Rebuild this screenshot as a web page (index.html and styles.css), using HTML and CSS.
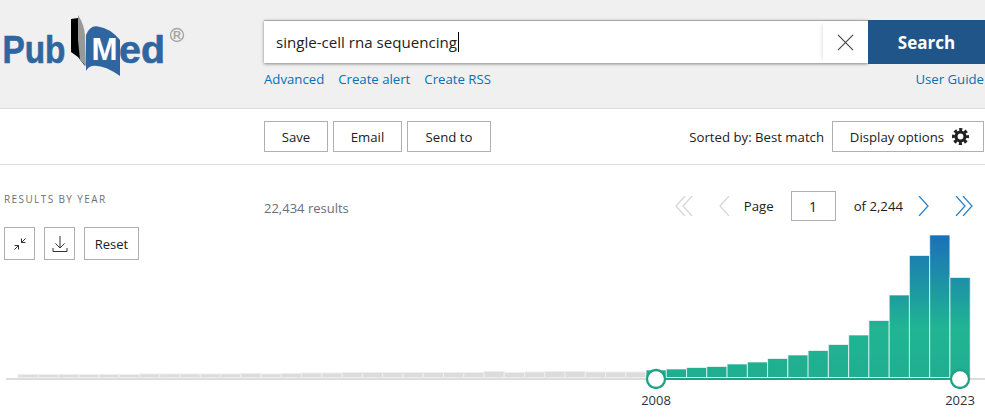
FILE: index.html
```html
<!DOCTYPE html>
<html lang="en">
<head>
<meta charset="utf-8">
<title>single-cell rna sequencing - PubMed</title>
<link rel="stylesheet" href="styles.css">
</head>
<body>
<header class="masthead">
  <div class="logo-col">
    <svg class="logo" width="190" height="80" viewBox="0 0 190 80">
      <text class="logo-word" x="2.500" y="63" textLength="63" lengthAdjust="spacingAndGlyphs">Pub</text>
      <text class="logo-word" x="119" y="63" textLength="46" lengthAdjust="spacingAndGlyphs">ed</text>
      <path d="M71 19 L78 18 L80 35 L85 66 L78 57 L71 52 Z" fill="#000"/>
      <path d="M78 15 Q84 24 85 35 L86 66 L80 60 L78 40 Z" fill="#999"/>
      <path d="M86 35 Q90 25 98 26.500 Q110 28 120 40 L120 76 Q103 64 92 66 Q88 67 86 71 Z" fill="#30669f"/>
      <text class="logo-m" x="91.500" y="60" textLength="26" lengthAdjust="spacingAndGlyphs">M</text>
      <circle cx="177" cy="35" r="6.500" fill="none" stroke="#a5a5a5" stroke-width="1.400"/>
      <text class="logo-r" x="177" y="39">R</text>
    </svg>
  </div>
  <div class="search-col">
    <form class="search-row">
      <div class="search-box">
        <span class="query">single-cell rna sequencing</span><span class="caret"></span>
        <span class="clear">
          <svg width="17" height="17" viewBox="0 0 18 18"><path d="M1 1 L17 17 M17 1 L1 17" stroke="#444" stroke-width="1.200" fill="none"/></svg>
        </span>
      </div>
      <button class="search-btn" type="button">Search</button>
    </form>
    <nav class="search-links">
      <a href="#">Advanced</a>
      <a href="#">Create alert</a>
      <a href="#">Create RSS</a>
      <a class="guide" href="#">User Guide</a>
    </nav>
  </div>
</header>

<section class="toolbar">
  <div class="actions">
    <button class="btn btn-save" type="button">Save</button>
    <button class="btn btn-email" type="button">Email</button>
    <button class="btn btn-send" type="button">Send to</button>
  </div>
  <div class="sort">
    <span>Sorted by: Best match</span>
    <button class="btn btn-display" type="button">Display options
      <svg class="gear" width="17" height="17" viewBox="0 0 17 17">
        <circle cx="8.500" cy="8.500" r="4.500" fill="none" stroke="#212121" stroke-width="3.200"/>
        <circle cx="8.500" cy="8.500" r="7" fill="none" stroke="#212121" stroke-width="3" stroke-dasharray="3.100 2.400" stroke-dashoffset="1.550"/>
      </svg>
    </button>
  </div>
</section>

<main class="results">
  <div class="results-head">
    <div class="year-col">
      <h2 class="year-title">RESULTS BY YEAR</h2>
      <div class="year-actions">
        <button class="btn icon-btn" type="button" aria-label="Collapse">
          <svg width="14" height="14" viewBox="0 0 14 14"><path d="M8.500 1.500 L8.500 5.500 L12.500 5.500 M8.500 5.500 L12.500 1.500 M1.500 8.500 L5.500 8.500 L5.500 12.500 M5.500 8.500 L1.500 12.500" fill="none" stroke="#333" stroke-width="1"/></svg>
        </button>
        <button class="btn icon-btn" type="button" aria-label="Download">
          <svg width="16" height="18" viewBox="0 0 16 18"><path d="M8 1 L8 13 M3.500 8.500 L8 13 L12.500 8.500 M1 13 L1 16.500 L15 16.500 L15 13" fill="none" stroke="#333" stroke-width="1"/></svg>
        </button>
        <button class="btn btn-reset" type="button">Reset</button>
      </div>
    </div>
    <div class="count">22,434 results</div>
    <div class="pager">
      <svg class="pg-double" width="18" height="20" viewBox="0 0 18 20"><path d="M10 0 L1 10 L10 20 M17 0 L8 10 L17 20" class="off"/></svg>
      <svg class="pg-single" width="11" height="20" viewBox="0 0 11 20"><path d="M10 0 L1 10 L10 20" class="off"/></svg>
      <span class="pg-label">Page</span>
      <span class="pg-input">1</span>
      <span class="pg-of">of 2,244</span>
      <svg class="pg-next" width="11" height="20" viewBox="0 0 11 20"><path d="M1 0 L10 10 L1 20" class="on"/></svg>
      <svg class="pg-last" width="18" height="20" viewBox="0 0 18 20"><path d="M1 0 L10 10 L1 20 M8 0 L17 10 L8 20" class="on"/></svg>
    </div>
  </div>

  <svg class="chart" width="985" height="195" viewBox="0 225 985 195">
    <defs>
      <linearGradient id="barfill" gradientUnits="userSpaceOnUse" x1="0" y1="235" x2="0" y2="377">
        <stop offset="0" stop-color="#1a70b8"/>
        <stop offset="0.66" stop-color="#20b593"/>
        <stop offset="1" stop-color="#1fae90"/>
      </linearGradient>
    </defs>
    <rect class="track" x="6" y="378" width="979" height="2"/>
    <g class="bars-old">
      <rect x="18" y="374.500" width="20.200" height="3"/><rect x="38.300" y="374.500" width="20.200" height="3"/>
      <rect x="58.500" y="374.500" width="20.200" height="3"/><rect x="78.800" y="374.500" width="20.200" height="3"/>
      <rect x="99" y="374.500" width="20.200" height="3"/><rect x="119.300" y="374.500" width="20.200" height="3"/>
      <rect x="139.600" y="374" width="20.200" height="3.500"/><rect x="159.800" y="374" width="20.200" height="3.500"/>
      <rect x="180.100" y="374" width="20.200" height="3.500"/><rect x="200.300" y="374" width="20.200" height="3.500"/>
      <rect x="220.600" y="374" width="20.200" height="3.500"/><rect x="240.900" y="373.500" width="20.200" height="4"/>
      <rect x="261.100" y="374" width="20.200" height="3.500"/><rect x="281.400" y="373.500" width="20.200" height="4"/>
      <rect x="301.600" y="373" width="20.200" height="4.500"/><rect x="321.900" y="373" width="20.200" height="4.500"/>
      <rect x="342.200" y="372.500" width="20.200" height="5"/><rect x="362.400" y="372.500" width="20.200" height="5"/>
      <rect x="382.700" y="372.500" width="20.200" height="5"/><rect x="402.900" y="372.500" width="20.200" height="5"/>
      <rect x="423.200" y="372.500" width="20.200" height="5"/><rect x="443.500" y="372.500" width="20.200" height="5"/>
      <rect x="463.700" y="372.500" width="20.200" height="5"/><rect x="484" y="371.500" width="20.200" height="6"/>
      <rect x="504.200" y="372.500" width="20.200" height="5"/><rect x="524.500" y="372" width="20.200" height="5.500"/>
      <rect x="544.800" y="371.500" width="20.200" height="6"/><rect x="565" y="371.500" width="20.200" height="6"/>
      <rect x="585.300" y="372" width="20.200" height="5.500"/><rect x="605.500" y="372" width="20.200" height="5.500"/>
      <rect x="625.800" y="372" width="20.200" height="5.500"/>
    </g>
    <g class="bars-new">
      <rect x="646.100" y="370" width="20.200" height="7.500"/><rect x="666.300" y="369" width="20.200" height="8.500"/>
      <rect x="686.600" y="367.500" width="20.200" height="10"/><rect x="706.800" y="366.500" width="20.200" height="11"/>
      <rect x="727.100" y="364" width="20.200" height="13.500"/><rect x="747.400" y="362" width="20.200" height="15.500"/>
      <rect x="767.600" y="358.500" width="20.200" height="19"/><rect x="787.900" y="355" width="20.200" height="22.500"/>
      <rect x="808.100" y="350.500" width="20.200" height="27"/><rect x="828.400" y="344.500" width="20.200" height="33"/>
      <rect x="848.700" y="335" width="20.200" height="42.500"/><rect x="868.900" y="320.500" width="20.200" height="57"/>
      <rect x="889.200" y="295" width="20.200" height="82.500"/><rect x="909.400" y="255.500" width="20.200" height="122"/>
      <rect x="929.700" y="235" width="20.200" height="142.500"/><rect x="950" y="277.500" width="20.200" height="100"/>
    </g>
    <rect class="range" x="656" y="378" width="304" height="2"/>
    <circle class="handle" cx="656" cy="379" r="9"/>
    <circle class="handle" cx="960" cy="379" r="9"/>
    <text class="year" x="656" y="405">2008</text>
    <text class="year" x="960" y="405">2023</text>
  </svg>
</main>
</body>
</html>
```
FILE: styles.css
```css
* { box-sizing: border-box; }
html, body { margin: 0; padding: 0; }
body {
  width: 985px;
  height: 420px;
  overflow: hidden;
  background: #fff;
  color: #212121;
  font-family: "Open Sans", "Noto Sans", sans-serif;
  font-size: 13.200px;
}
a { color: #0071bc; text-decoration: none; }
button { font: inherit; color: inherit; cursor: pointer; }

.masthead {
  display: flex;
  height: 109px;
  background: #f0f0f0;
  border-bottom: 1px solid #dcdcdc;
}
.logo-col { width: 264px; flex: none; }
.logo { display: block; }
.logo-word {
  font: bold 39px "Liberation Sans", sans-serif;
  fill: #30669f;
  stroke: #30669f;
  stroke-width: .6px;
}
.logo-m { font: bold 32px "Liberation Sans", sans-serif; fill: #fff; }
.logo-r { font: bold 11px "Liberation Sans", sans-serif; fill: #a5a5a5; text-anchor: middle; }

.search-col { flex: 1; padding-top: 20px; }
.search-row { display: flex; height: 44px; }
.search-box {
  flex: 1;
  display: flex;
  align-items: center;
  height: 43px;
  padding-left: 12px;
  background: #fff;
  border-top: 1px solid #a8a8a8;
  box-shadow: 0 1px 3px rgba(0, 0, 0, .45);
}
.query { font-size: 15.100px; white-space: nowrap; }
.caret { width: 1px; height: 20px; margin-left: 1px; background: #000; }
.clear {
  margin-left: auto;
  display: flex;
  align-items: center;
  justify-content: center;
  width: 45px;
  height: 100%;
  box-shadow: -3px 0 4px -3px rgba(0, 0, 0, .18);
}
.search-btn {
  width: 117px;
  border: 0;
  background: #20558a;
  color: #fff;
  font-size: 17px;
  font-weight: 700;
}
.search-links {
  display: flex;
  gap: 14px;
  padding-top: 6px;
  line-height: 19px;
}
.guide { margin-left: auto; padding-right: 1px; }

.toolbar {
  display: flex;
  justify-content: space-between;
  height: 56px;
  padding: 12px 1px 0 264px;
  border-bottom: 1px solid #dcdcdc;
}
.actions { display: flex; gap: 5px; }
.sort { display: flex; align-items: center; gap: 8px; height: 31px; }
.btn {
  height: 31px;
  padding: 0;
  background: #fff;
  border: 1px solid #aeb0b5;
  display: inline-flex;
  align-items: center;
  justify-content: center;
}
.btn-save { width: 64px; }
.btn-email { width: 69px; }
.btn-send { width: 84px; }
.btn-display { width: 152px; gap: 8px; padding-left: 3px; }

.results { display: grid; height: 255px; }
.results-head, .chart { grid-area: 1 / 1; }
.results-head {
  display: flex;
  align-items: flex-start;
  padding: 26px 0 0 4px;
}
.chart { display: block; margin-top: 60px; }

.year-col { width: 260px; flex: none; }
.year-title {
  margin: 0;
  font-size: 10px;
  font-weight: 400;
  letter-spacing: 1.400px;
  line-height: 16px;
  color: #6b6f76;
}
.year-actions { display: flex; gap: 9px; margin-top: 20px; }
.icon-btn { width: 31px; height: 33px; }
.btn-reset { width: 55px; height: 33px; font-size: 13px; }

.count { padding-top: 8px; line-height: 18px; color: #6b6f76; font-size: 13px; }

.pager {
  margin-left: auto;
  display: flex;
  align-items: center;
  height: 30px;
  padding-right: 12px;
}
.pager svg path { fill: none; stroke-width: 1.300; }
.off { stroke: #d6d7d9; }
.on { stroke: #2e85c9; }
.pg-single { margin-left: 26px; }
.pg-label { margin-left: 14px; }
.pg-input {
  width: 45px;
  height: 30px;
  margin-left: 17px;
  border: 1px solid #aeb0b5;
  display: flex;
  align-items: center;
  justify-content: center;
  font-size: 14px;
}
.pg-of { margin-left: 18px; }
.pg-next { margin-left: 15px; }
.pg-last { margin-left: 26px; }

.track { fill: #dcdcdc; }
.bars-old rect { fill: #dcdcdc; stroke: #eee; stroke-width: 1; }
.bars-new rect { fill: url(#barfill); stroke: #fff; stroke-opacity: .65; stroke-width: 1; }
.range { fill: #20a184; }
.handle { fill: #fff; stroke: #20a184; stroke-width: 2.300; }
.year { font-size: 13px; text-anchor: middle; fill: #333; }
```
